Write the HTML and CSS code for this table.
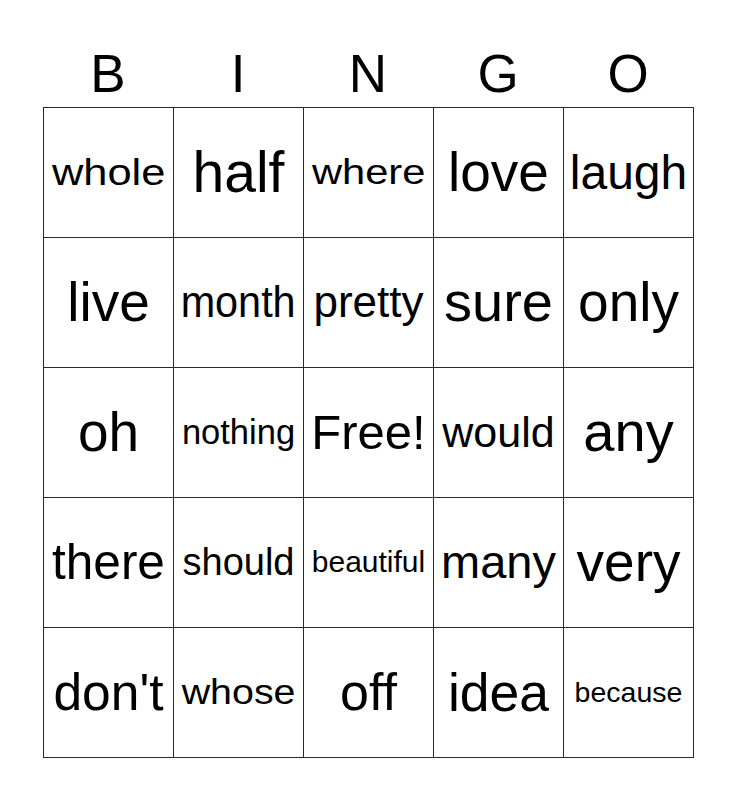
FILE: index.html
```html
<!DOCTYPE html>
<html>
<head>
<meta charset="utf-8">
<link rel="stylesheet" href="styles.css">
</head>
<body>
<div class="card">
  <div class="head">
    <div>B</div><div>I</div><div>N</div><div>G</div><div>O</div>
  </div>
  <div class="grid">
    <div class="cell"><span class="word" style="--fs:36.5px;--sx:1.19">whole</span></div>
    <div class="cell"><span class="word" style="--fs:57px">half</span></div>
    <div class="cell"><span class="word" style="--fs:35px;--sx:1.19">where</span></div>
    <div class="cell"><span class="word" style="--fs:55px">love</span></div>
    <div class="cell"><span class="word" style="--fs:48px">laugh</span></div>

    <div class="cell"><span class="word" style="--fs:55px">live</span></div>
    <div class="cell"><span class="word" style="--fs:44px;--sx:0.94">month</span></div>
    <div class="cell"><span class="word" style="--fs:44px">pretty</span></div>
    <div class="cell"><span class="word" style="--fs:56px">sure</span></div>
    <div class="cell"><span class="word" style="--fs:55px">only</span></div>

    <div class="cell"><span class="word" style="--fs:55px">oh</span></div>
    <div class="cell"><span class="word" style="--fs:34.5px">nothing</span></div>
    <div class="cell"><span class="word" style="--fs:49px">Free!</span></div>
    <div class="cell"><span class="word" style="--fs:43px">would</span></div>
    <div class="cell"><span class="word" style="--fs:56px">any</span></div>

    <div class="cell"><span class="word" style="--fs:49.5px">there</span></div>
    <div class="cell"><span class="word" style="--fs:38px">should</span></div>
    <div class="cell"><span class="word" style="--fs:30px">beautiful</span></div>
    <div class="cell"><span class="word" style="--fs:47px">many</span></div>
    <div class="cell"><span class="word" style="--fs:55px">very</span></div>

    <div class="cell"><span class="word" style="--fs:51.5px">don't</span></div>
    <div class="cell"><span class="word" style="--fs:35px;--sx:1.125">whose</span></div>
    <div class="cell"><span class="word" style="--fs:52px">off</span></div>
    <div class="cell"><span class="word" style="--fs:53.5px">idea</span></div>
    <div class="cell"><span class="word" style="--fs:28.5px">because</span></div>
  </div>
</div>
</body>
</html>
```

FILE: styles.css
```css
html, body {
  margin: 0;
  padding: 0;
  background: #ffffff;
}
body {
  font-family: "Liberation Sans", Arial, sans-serif;
  color: #000000;
}
.card {
  padding: 40px 0 0 43px;
  width: 651px;
}
.head {
  display: grid;
  grid-template-columns: repeat(5, 130px);
  height: 67px;
  font-size: 53px;
}
.head div {
  display: flex;
  align-items: center;
  justify-content: center;
  line-height: 1;
}
.grid {
  display: grid;
  grid-template-columns: repeat(5, 129px);
  grid-auto-rows: 129px;
  gap: 1px;
  padding: 1px;
  background: #2a2a2a;
  width: 649px;
}
.cell {
  background: #ffffff;
  display: flex;
  align-items: center;
  justify-content: center;
  overflow: visible;
}
.word {
  display: inline-block;
  font-size: var(--fs);
  line-height: 1.15;
  white-space: nowrap;
  transform: scaleX(var(--sx, 1));
}
```
